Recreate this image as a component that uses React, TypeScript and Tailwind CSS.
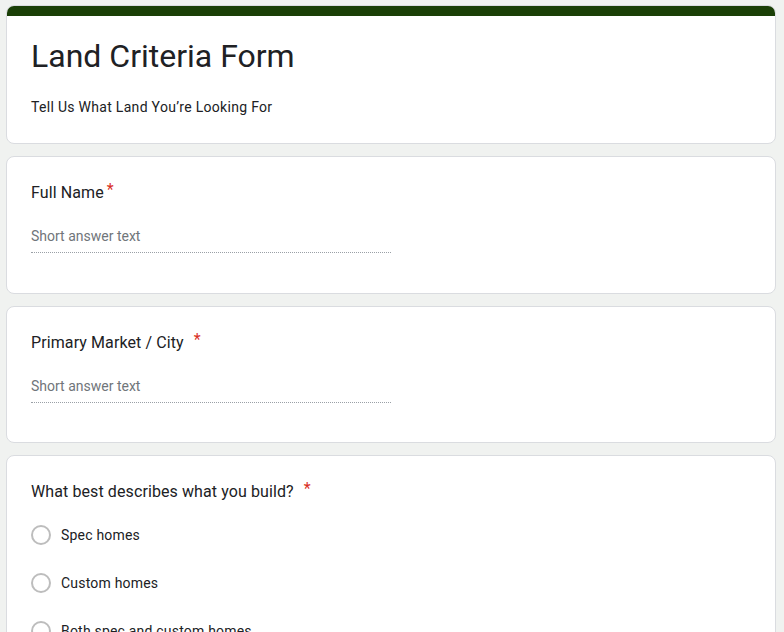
const font = { fontFamily: "Roboto, 'Liberation Sans', sans-serif" };

function Star({ gap }: { gap?: boolean }) {
  return (
    <span className={`text-[#d93025] relative -top-[3px] ${gap ? "ml-[10px]" : "ml-[3px]"}`}>*</span>
  );
}

function ShortAnswer({ label, gap, tall }: { label: string; gap?: boolean; tall?: boolean }) {
  return (
    <div className={`bg-white border border-[#dadce0] rounded-[8px] px-6 pt-6 ${tall ? "pb-[40px]" : "pb-[39px]"}`}>
      <div className="text-[16px] leading-6 text-[#202124] tracking-[0.1px]">
        {label}
        <Star gap={gap} />
      </div>
      <div className="mt-[21px] w-[360px] border-b border-dotted border-[#9aa0a6] pb-[6px] text-[14px] leading-5 text-[#70757a]">
        Short answer text
      </div>
    </div>
  );
}

const options = ["Spec homes", "Custom homes", "Both spec and custom homes"];

export default function App() {
  return (
    <div className="min-h-[632px] bg-[#f0f2f0] pl-[6px] pt-[5px] pb-6" style={font}>
      <div className="w-[770px] flex flex-col gap-3">
        <div className="bg-white border border-[#dadce0] rounded-[8px] overflow-hidden">
          <div className="h-[10px] bg-[#1a3f06]" />
          <div className="px-6 pt-[20px] pb-[26px]">
            <h1 className="text-[32px] leading-10 text-[#202124]">Land Criteria Form</h1>
            <p className="mt-[21px] text-[14px] leading-5 text-[#202124] tracking-[0.3px]">
              Tell Us What Land You’re Looking For
            </p>
          </div>
        </div>
        <ShortAnswer label="Full Name" tall />
        <ShortAnswer label="Primary Market / City" gap />
        <div className="bg-white border border-[#dadce0] rounded-[8px] px-6 pt-6 pb-6">
          <div className="text-[16px] leading-6 text-[#202124] tracking-[0.1px]">
            What best describes what you build?
            <Star gap />
          </div>
          <div className="mt-[21px] flex flex-col gap-[28px]">
            {options.map((o) => (
              <label key={o} className="flex items-center gap-[10px] text-[14px] leading-5 text-[#202124] tracking-[0.2px]">
                <span className="w-5 h-5 rounded-full border-2 border-[#bdbdbd] shrink-0" />
                {o}
              </label>
            ))}
          </div>
        </div>
      </div>
    </div>
  );
}
